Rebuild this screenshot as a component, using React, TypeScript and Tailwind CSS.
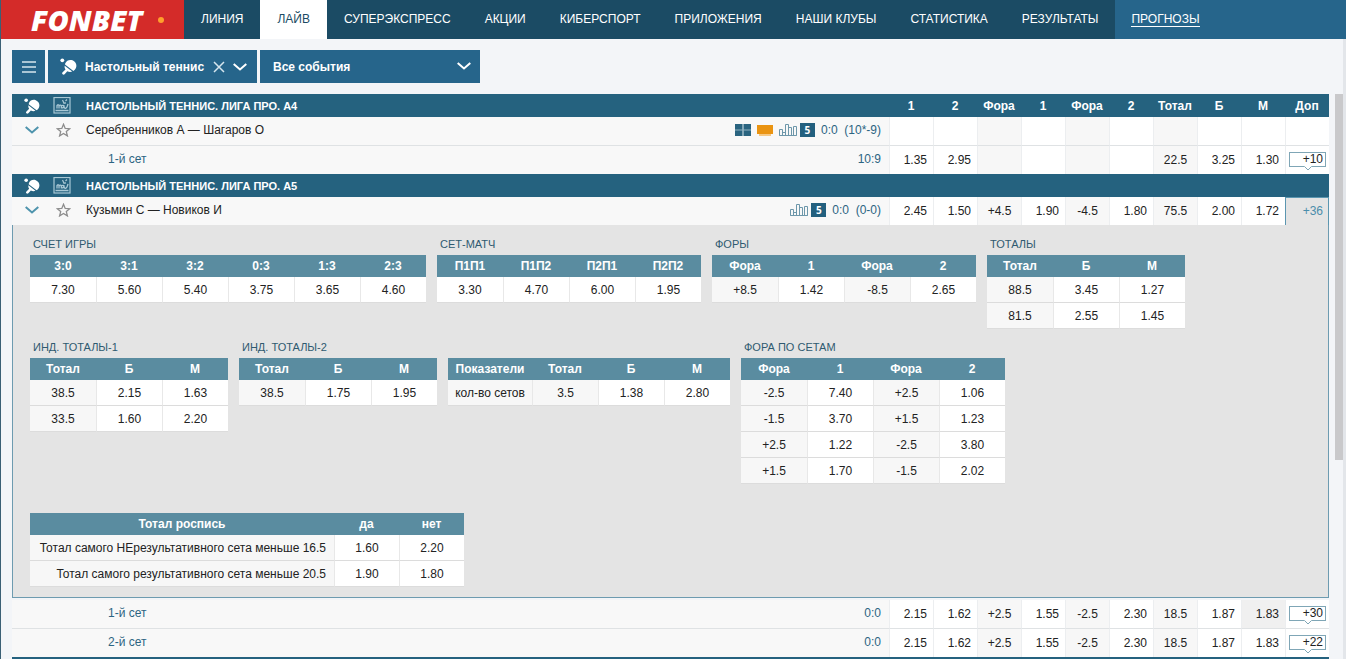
import React from 'react';
import clsx from 'clsx';

type SubTable = {
  title?: string;
  head: string[];
  widths: number[];
  rows: string[][];
  // indexes of the parameter (grey) columns
  params?: number[];
  alignRight?: boolean;
};

const navItems = [
  'ЛИНИЯ',
  'ЛАЙВ',
  'СУПЕРЭКСПРЕСС',
  'АКЦИИ',
  'КИБЕРСПОРТ',
  'ПРИЛОЖЕНИЯ',
  'НАШИ КЛУБЫ',
  'СТАТИСТИКА',
  'РЕЗУЛЬТАТЫ',
];

const columns = ['1', '2', 'Фора', '1', 'Фора', '2', 'Тотал', 'Б', 'М', 'Доп'];
const paramColumns = [2, 4, 6];

const subTables: SubTable[] = [
  {
    title: 'СЧЕТ ИГРЫ',
    head: ['3:0', '3:1', '3:2', '0:3', '1:3', '2:3'],
    widths: [66, 66, 66, 66, 66, 66],
    rows: [['7.30', '5.60', '5.40', '3.75', '3.65', '4.60']],
  },
  {
    title: 'СЕТ-МАТЧ',
    head: ['П1П1', 'П1П2', 'П2П1', 'П2П2'],
    widths: [66, 66, 66, 66],
    rows: [['3.30', '4.70', '6.00', '1.95']],
  },
  {
    title: 'ФОРЫ',
    head: ['Фора', '1', 'Фора', '2'],
    widths: [66, 66, 66, 66],
    rows: [['+8.5', '1.42', '-8.5', '2.65']],
    params: [0, 2],
  },
  {
    title: 'ТОТАЛЫ',
    head: ['Тотал', 'Б', 'М'],
    widths: [66, 66, 66],
    rows: [
      ['88.5', '3.45', '1.27'],
      ['81.5', '2.55', '1.45'],
    ],
    params: [0],
  },
  {
    title: 'ИНД. ТОТАЛЫ-1',
    head: ['Тотал', 'Б', 'М'],
    widths: [66, 66, 66],
    rows: [
      ['38.5', '2.15', '1.63'],
      ['33.5', '1.60', '2.20'],
    ],
    params: [0],
  },
  {
    title: 'ИНД. ТОТАЛЫ-2',
    head: ['Тотал', 'Б', 'М'],
    widths: [66, 66, 66],
    rows: [['38.5', '1.75', '1.95']],
    params: [0],
  },
  {
    head: ['Показатели', 'Тотал', 'Б', 'М'],
    widths: [84, 66, 66, 66],
    rows: [['кол-во сетов', '3.5', '1.38', '2.80']],
    params: [0, 1],
  },
  {
    title: 'ФОРА ПО СЕТАМ',
    head: ['Фора', '1', 'Фора', '2'],
    widths: [66, 66, 66, 66],
    rows: [
      ['-2.5', '7.40', '+2.5', '1.06'],
      ['-1.5', '3.70', '+1.5', '1.23'],
      ['+2.5', '1.22', '-2.5', '3.80'],
      ['+1.5', '1.70', '-1.5', '2.02'],
    ],
    params: [0, 2],
  },
  {
    head: ['Тотал роспись', 'да', 'нет'],
    widths: [304, 65, 65],
    rows: [
      ['Тотал самого НЕрезультативного сета меньше 16.5', '1.60', '2.20'],
      ['Тотал самого результативного сета меньше 20.5', '1.90', '1.80'],
    ],
    params: [0],
    alignRight: true,
  },
];

const PaddleIcon = ({ className }: { className: string }) => (
  <svg className={className} viewBox="0 0 17 17" fill="#fff" aria-hidden="true">
    <circle cx="2.300" cy="2.300" r="1.900" />
    <path d="M5.300 5.200C6.500 2.400 9.600 1.200 12.500 2.300c3.300 1.400 4.800 4.800 3.300 8-.5 1.200-1.300 2.100-2.400 2.700L5 6.600c0-.5.1-1 .3-1.400Z" />
    <path d="M4.700 7.700l7.500 5.900c-1.700.6-3.400.5-4.900-.3l-2.700 2.900c-.6.6-1.500.6-2 .1-.6-.5-.6-1.400 0-2l2.900-2.900c-.8-1.100-1.100-2.400-.8-3.700Z" />
  </svg>
);

const LeagueIcon = () => (
  <svg width="18" height="17" viewBox="0 0 18 17" fill="none" stroke="#a9c8d5" aria-hidden="true">
    <rect x="1" y="0.500" width="16" height="15.500" strokeWidth="1.200" />
    <path d="M2.500 13.500h13" strokeWidth="1.500" />
    <path d="M4 11.500V8.500c1-1 2-1 2 .2v2.800m0-2.500c1-1.200 2.300-1 2.300.2v2.300M8.300 9c1.500-1.200 2.700-.8 2.500.6-.2 1.500-2 1.700-2.200.6M10.800 8c.2 2 .6 3.500 1.700 3.300 1.500-.4 2-2.300 2.500-4.500" strokeWidth="1.300" />
    <path d="M9.500 3l1.500 3.200 2-.4M12.500 4l1.500-1.500" strokeWidth="1.200" />
  </svg>
);

const ChevronIcon = ({ className }: { className?: string }) => (
  <svg className={className} width="14" height="8" viewBox="0 0 14 8" fill="none" stroke="currentColor" strokeWidth="2" aria-hidden="true">
    <path d="M.7 1l6.300 5.500L13.300 1" />
  </svg>
);

const StarIcon = () => (
  <svg width="15" height="14" viewBox="0 0 15 14" fill="none" stroke="#8d8d8d" strokeWidth="1.300" aria-hidden="true">
    <path d="M7.500 1.300l1.700 4.100 4.500.3-3.400 2.900 1.100 4.300-3.900-2.400-3.900 2.400 1.100-4.300L1.300 5.700l4.500-.3z" />
  </svg>
);

const StatsIcon = () => (
  <svg width="18" height="12" viewBox="0 0 18 12" fill="none" stroke="#6d97aa" aria-hidden="true">
    <path d="M.5 11.500v-6h3v6zM3.500 11.500v-3h3v3M6.500 11.500V.500h3v11zM9.500 11.500v-8h3v8M12.500 11.500v-6M14.500 11.500v-9h3v9zM.500 11.500h17" />
  </svg>
);

const CourtIcon = () => (
  <svg width="16" height="12" viewBox="0 0 16 12" aria-hidden="true">
    <rect width="16" height="12" fill="#2a6480" />
    <path d="M8 0v12" stroke="#dbe8ee" strokeWidth="1" />
    <path d="M0 6h16" stroke="#8fb2c1" strokeWidth="1" />
  </svg>
);

const VideoIcon = () => (
  <svg width="16" height="11" viewBox="0 0 16 11" aria-hidden="true">
    <rect width="16" height="9" fill="#ea9412" />
    <path d="M2 9h12v2H2z" fill="#f6c883" />
  </svg>
);

const FormatBadge = () => (
  <span className="flex h-[14px] w-[15px] items-center justify-center bg-[#23607f] font-['Open_Sans',sans-serif] text-[10px] font-bold text-white">
    5
  </span>
);

const Header = () => (
  <header className="flex h-[39px] shrink-0 bg-[#1b4b64]">
    <a href="#home" className="flex w-[183px] items-center bg-[#d42b29] pl-[30px]">
      <span className="font-['Open_Sans',sans-serif] text-[29px] font-extrabold italic leading-none text-white">FONBET</span>
      <span className="ml-4 size-[6px] rounded-full bg-[#ffa02c]" />
    </a>
    <nav className="flex grow pb-[2px]">
      {navItems.map((item) => (
        <a
          key={item}
          href={`#${item}`}
          className={clsx(
            '-mb-[2px] flex items-center whitespace-nowrap px-[17px] pb-[2px]',
            item === 'ЛАЙВ' ? 'bg-white text-[#1b4b64]' : 'text-white',
          )}
        >
          {item}
        </a>
      ))}
      <div className="-mb-[2px] flex grow items-center bg-[#26658b] pl-4">
        <a href="#forecasts" className="border-b border-white leading-[14px] text-white">ПРОГНОЗЫ</a>
      </div>
    </nav>
  </header>
);

const Toolbar = () => (
  <div className="flex h-[33px] shrink-0 gap-[3px] font-bold text-white">
    <button type="button" aria-label="Меню" className="flex w-[33px] items-center justify-center bg-[#26658b]">
      <svg width="14" height="12" viewBox="0 0 14 12" stroke="#d6e6ee" strokeWidth="1.500" aria-hidden="true">
        <path d="M0 1h14M0 6h14M0 11h14" />
      </svg>
    </button>
    <div className="flex w-[209px] items-center bg-[#26658b] pl-3">
      <PaddleIcon className="size-[17px]" />
      <button type="button" className="ml-2 grow whitespace-nowrap text-left">Настольный теннис</button>
      <button type="button" aria-label="Сбросить" className="mr-2">
        <svg width="12" height="12" viewBox="0 0 12 12" stroke="#d6e6ee" strokeWidth="1.500" aria-hidden="true">
          <path d="M1 1l10 10M11 1L1 11" />
        </svg>
      </button>
      <button type="button" aria-label="Выбрать спорт" className="mr-[10px]">
        <ChevronIcon />
      </button>
    </div>
    <div className="relative w-[220px]">
      <select aria-label="События" className="h-full w-full appearance-none bg-[#26658b] pl-[13px] outline-none">
        <option>Все события</option>
      </select>
      <ChevronIcon className="pointer-events-none absolute right-[9px] top-3" />
    </div>
  </div>
);

const MoreButton = ({ count }: { count: string }) => (
  <button
    type="button"
    className="relative block h-[15px] w-[37px] border border-[#7fa6b6] pr-[2px] text-right leading-[13px]"
  >
    {count}
    <svg className="absolute left-[14px] top-[13px]" width="8" height="5" viewBox="0 0 8 5" aria-hidden="true">
      <path d="M0 0h8L4 4z" fill="#fff" />
      <path d="M.5.500L4 4 7.500.500" fill="none" stroke="#7fa6b6" />
    </svg>
  </button>
);

const LeagueRow = ({ name, showColumns }: { name: string; showColumns?: boolean }) => (
  <tr className="h-[23px] bg-[#25627f] font-bold text-white">
    <th scope="colgroup" colSpan={showColumns ? 1 : 11} className="text-left text-[11px]">
      <span className="flex items-center">
        <span className="ml-3 w-[29px]"><PaddleIcon className="size-4" /></span>
        <span className="w-[33px]"><LeagueIcon /></span>
        {name}
      </span>
    </th>
    {showColumns && columns.map((col, i) => <th key={i} scope="col">{col}</th>)}
  </tr>
);

interface OddsRowProps {
  name: string;
  score: string;
  odds: string[];
  more?: string;
  isEvent?: boolean;
  isOpen?: boolean;
  withVideo?: boolean;
  changed?: number;
  noLine?: boolean;
}

const OddsRow: React.FC<OddsRowProps> = ({ name, score, odds, more, isEvent, isOpen, withVideo, changed, noLine }) => {
  const line = noLine ? '' : 'border-b border-b-[#dfe2e4]';

  return (
    <tr className={noLine ? 'h-7' : 'h-[29px]'}>
      <td className={clsx('bg-[#f8f8f8] pb-[2px] pr-2', line)}>
        <div className="flex items-center">
          {isEvent ? (
            <>
              <button type="button" aria-label="Свернуть" className="ml-[13px] w-[31px] text-[#4f94ad]">
                <ChevronIcon />
              </button>
              <button type="button" aria-label="В избранное" className="w-[30px]"><StarIcon /></button>
              <span className="grow text-[#222]">{name}</span>
              <span className="flex items-center gap-[6px]">
                {withVideo && <CourtIcon />}
                {withVideo && <VideoIcon />}
                <span className="flex items-center gap-[3px]">
                  <StatsIcon />
                  <FormatBadge />
                </span>
              </span>
            </>
          ) : (
            <span className="grow pl-24 text-[#2c6482]">{name}</span>
          )}
          <span className="whitespace-pre pl-[6px] text-[#2c6482]">{score}</span>
        </div>
      </td>
      {columns.slice(0, 9).map((_, i) => (
        <td
          key={i}
          className={clsx(
            'border-l border-l-[#eceef0]',
            line,
            paramColumns.includes(i) ? 'bg-[#f7f7f7] text-center' : 'pr-[6px] text-right',
            !paramColumns.includes(i) && (changed === i ? 'bg-[#f0f0f0]' : 'bg-white'),
          )}
        >
          {odds[i]}
        </td>
      ))}
      {isOpen ? (
        <td className="border-x border-t border-[#5b96b0] bg-[#e4e4e4] pb-[2px] pr-[5px] text-right text-[#4a8dab]">
          <button type="button">{more}</button>
        </td>
      ) : (
        <td className={clsx('border-l border-l-[#eceef0] bg-white pb-[2px] pl-[3px]', line)}>
          {more && <MoreButton count={more} />}
        </td>
      )}
    </tr>
  );
};

const OddsTable = ({ table }: { table: SubTable }) => (
  <section>
    <h3 className="h-5 pl-[3px] text-[11px] leading-[18px] text-[#2f5a70]">{table.title}</h3>
    <table className="table-fixed border-separate border-spacing-0 text-center">
      <colgroup>
        {table.widths.map((width, i) => <col key={i} style={{ width }} />)}
      </colgroup>
      <thead>
        <tr className="h-[22px] bg-[#5a8ca0] text-white">
          {table.head.map((cell, i) => <th key={i} scope="col" className="font-bold">{cell}</th>)}
        </tr>
      </thead>
      <tbody>
        {table.rows.map((row, r) => (
          <tr key={r} className="h-[26px]">
            {row.map((cell, i) => (
              <td
                key={i}
                className={clsx(
                  'whitespace-nowrap border-b border-b-[#dcdcdc]',
                  i > 0 && 'border-l border-l-[#e8e8e8]',
                  table.params?.includes(i) ? 'bg-[#f7f7f7]' : 'bg-white',
                  table.alignRight && i === 0 && 'pr-2 text-right',
                )}
              >
                {cell}
              </td>
            ))}
          </tr>
        ))}
      </tbody>
    </table>
  </section>
);

export default function App() {
  const setOdds = ['2.15', '1.62', '+2.5', '1.55', '-2.5', '2.30', '18.5', '1.87', '1.83'];

  return (
    <div className="flex h-screen flex-col overflow-hidden border-l border-[#3a6075] bg-[#f3f5f8] font-['Liberation_Sans',Arial,sans-serif] text-[12px] leading-4 text-[#222]">
      <Header />
      <div className="flex min-h-0 grow">
        <main className="flex min-w-0 grow flex-col gap-[11px] overflow-hidden pl-[11px] pt-[11px]">
          <Toolbar />
          <div className="flex gap-[6px]">
            <table className="w-full table-fixed border-separate border-spacing-0">
              <colgroup>
                <col />
                {columns.map((_, i) => <col key={i} className="w-[44px]" />)}
              </colgroup>
              <tbody>
                <LeagueRow name="НАСТОЛЬНЫЙ ТЕННИС. ЛИГА ПРО. А4" showColumns />
                <OddsRow isEvent withVideo name="Серебренников А — Шагаров О" score="0:0  (10*-9)" odds={[]} />
                <OddsRow
                  noLine
                  name="1-й сет"
                  score="10:9"
                  odds={['1.35', '2.95', '', '', '', '', '22.5', '3.25', '1.30']}
                  more="+10"
                />
                <LeagueRow name="НАСТОЛЬНЫЙ ТЕННИС. ЛИГА ПРО. А5" />
                <OddsRow
                  isEvent
                  isOpen
                  noLine
                  name="Кузьмин С — Новиков И"
                  score="0:0  (0-0)"
                  odds={['2.45', '1.50', '+4.5', '1.90', '-4.5', '1.80', '75.5', '2.00', '1.72']}
                  more="+36"
                />
                <tr>
                  <td colSpan={11} className="pb-[2px]">
                    <div className="flex flex-wrap gap-x-[11px] gap-y-[9px] border-x border-b border-[#6d9bb0] bg-[#e4e4e4] px-[17px] pb-[10px] pt-[10px]">
                      {subTables.map((table, i) => <OddsTable key={i} table={table} />)}
                    </div>
                  </td>
                </tr>
                <OddsRow name="1-й сет" score="0:0" odds={setOdds} more="+30" changed={8} />
                <OddsRow noLine name="2-й сет" score="0:0" odds={setOdds} more="+22" />
                <tr className="h-[23px] bg-[#25627f]">
                  <td colSpan={11} />
                </tr>
              </tbody>
            </table>
            <div className="w-2 shrink-0">
              <div className="h-[366px] bg-[#c9c9cb]" />
            </div>
          </div>
        </main>
        <div className="w-[3px] shrink-0 bg-[#e3e6ea]" />
      </div>
    </div>
  );
}
